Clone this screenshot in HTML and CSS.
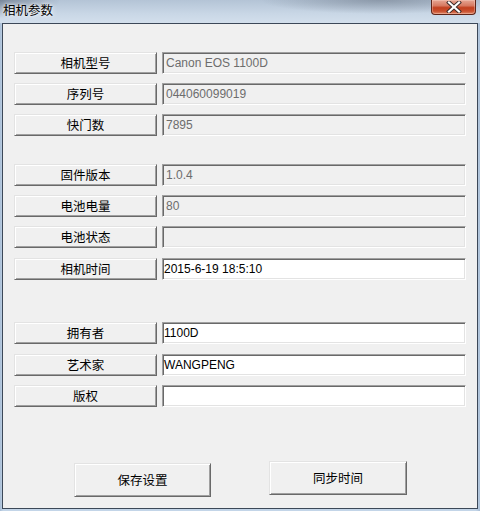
FILE: index.html
```html
<!DOCTYPE html>
<html>
<head>
<meta charset="utf-8">
<link rel="stylesheet" href="styles.css">
</head>
<body>
<div class="window">
  <div class="titlebar">
    <span class="title">相机参数</span>
    <div class="close">
      <svg width="20" height="12" viewBox="0 0 20 12">
        <path d="M5 1.5 L15 10.5 M15 1.5 L5 10.5" stroke="#3a2a28" stroke-width="4" stroke-linecap="square"/>
        <path d="M5 1.5 L15 10.5 M15 1.5 L5 10.5" stroke="#ffffff" stroke-width="2.2" stroke-linecap="square"/>
      </svg>
    </div>
  </div>
  <div class="client">
    <div class="row r1"><div class="btn">相机型号</div><div class="field ro">Canon EOS 1100D</div></div>
    <div class="row r2"><div class="btn">序列号</div><div class="field ro">044060099019</div></div>
    <div class="row r3"><div class="btn">快门数</div><div class="field ro">7895</div></div>
    <div class="row r4"><div class="btn">固件版本</div><div class="field ro">1.0.4</div></div>
    <div class="row r5"><div class="btn">电池电量</div><div class="field ro">80</div></div>
    <div class="row r6"><div class="btn">电池状态</div><div class="field ro"></div></div>
    <div class="row r7"><div class="btn">相机时间</div><div class="field ed">2015-6-19 18:5:10</div></div>
    <div class="row r8"><div class="btn">拥有者</div><div class="field ed">1100D</div></div>
    <div class="row r9"><div class="btn">艺术家</div><div class="field ed">WANGPENG</div></div>
    <div class="row r10"><div class="btn">版权</div><div class="field ed"></div></div>
    <div class="actions">
      <div class="btn big save">保存设置</div>
      <div class="btn big sync">同步时间</div>
    </div>
  </div>
</div>
</body>
</html>
```

FILE: styles.css
```css
html, body {
  margin: 0;
  padding: 0;
}
body {
  width: 480px;
  height: 511px;
  overflow: hidden;
  background: #bfd1e5;
  font-family: "Noto Sans CJK SC", sans-serif;
}
.window {
  width: 480px;
  height: 511px;
  display: flex;
  flex-direction: column;
  background: linear-gradient(to right, #a9bed6 0px, #c3d5e8 3px, #c3d5e8 476px, #a9bed6 480px);
}
.titlebar {
  height: 23px;
  position: relative;
  background:
    radial-gradient(ellipse 60px 18px at 0px 0px, rgba(70,85,105,0.55), rgba(70,85,105,0) 100%),
    radial-gradient(ellipse 120px 14px at 380px 0px, rgba(90,100,115,0.45), rgba(90,100,115,0) 100%),
    linear-gradient(to bottom, #b4c4d6 0%, #c9d7e6 60%, #d3dfec 100%);
}
.title {
  position: absolute;
  left: 3px;
  top: 1px;
  font-size: 12.5px;
  line-height: 18px;
  color: #000;
  text-shadow: 0 0 6px #fff, 0 0 3px #fff;
}
.close {
  position: absolute;
  left: 431px;
  top: 0;
  width: 45px;
  height: 15px;
  box-sizing: border-box;
  border: 1px solid #5e2418;
  border-top: none;
  border-radius: 0 0 4px 4px;
  background: linear-gradient(to bottom, #e6a693 0%, #d77a62 40%, #c2401f 55%, #c9502f 80%, #e08a6a 100%);
  box-shadow: inset 0 0 0 1px rgba(255,220,210,0.35);
  display: flex;
  align-items: center;
  justify-content: center;
}
.close svg {
  display: block;
  margin-top: -1px;
}
.client {
  margin: 0 2px 2px 2px;
  flex: 1;
  background: #f0f0f0;
  border: 1px solid #3c4858;
  padding: 28px 0 0 11px;
  display: flex;
  flex-direction: column;
}
.row {
  display: flex;
  height: 22px;
  gap: 5px;
}
.r1 { margin-top: 0; }
.r2, .r3, .r5, .r6, .r10 { margin-top: 9px; }
.r4 { margin-top: 28px; }
.r7 { margin-top: 10px; }
.r8 { margin-top: 42px; }
.r9 { margin-top: 10px; }
.btn {
  width: 143px;
  box-sizing: border-box;
  background: #f0f0f0;
  border-top: 1px solid #e3e3e3;
  border-left: 1px solid #e3e3e3;
  border-right: 1px solid #696969;
  border-bottom: 1px solid #696969;
  box-shadow: inset 1px 1px 0 #ffffff, inset -1px -1px 0 #a0a0a0;
  font-size: 12.5px;
  color: #000;
  display: flex;
  align-items: center;
  justify-content: center;
  line-height: 1;
}
.field {
  width: 304px;
  box-sizing: border-box;
  border-top: 1px solid #a0a0a0;
  border-left: 1px solid #a0a0a0;
  border-right: 1px solid #ffffff;
  border-bottom: 1px solid #ffffff;
  box-shadow: inset 1px 1px 0 #696969, inset -1px -1px 0 #e3e3e3;
  font-family: "Liberation Sans", Arial, sans-serif;
  font-size: 12px;
  display: flex;
  align-items: center;
}
.ro {
  background: #f0f0f0;
  color: #6d6d6d;
  padding-left: 3px;
}
.ed {
  background: #ffffff;
  color: #000;
  padding-left: 1px;
}
.actions {
  display: flex;
  margin-top: 54px;
  align-items: flex-start;
}
.big {
  height: 34px;
}
.save {
  width: 137px;
  margin-left: 60px;
  margin-top: 2px;
}
.sync {
  width: 138px;
  margin-left: 58px;
}
```
